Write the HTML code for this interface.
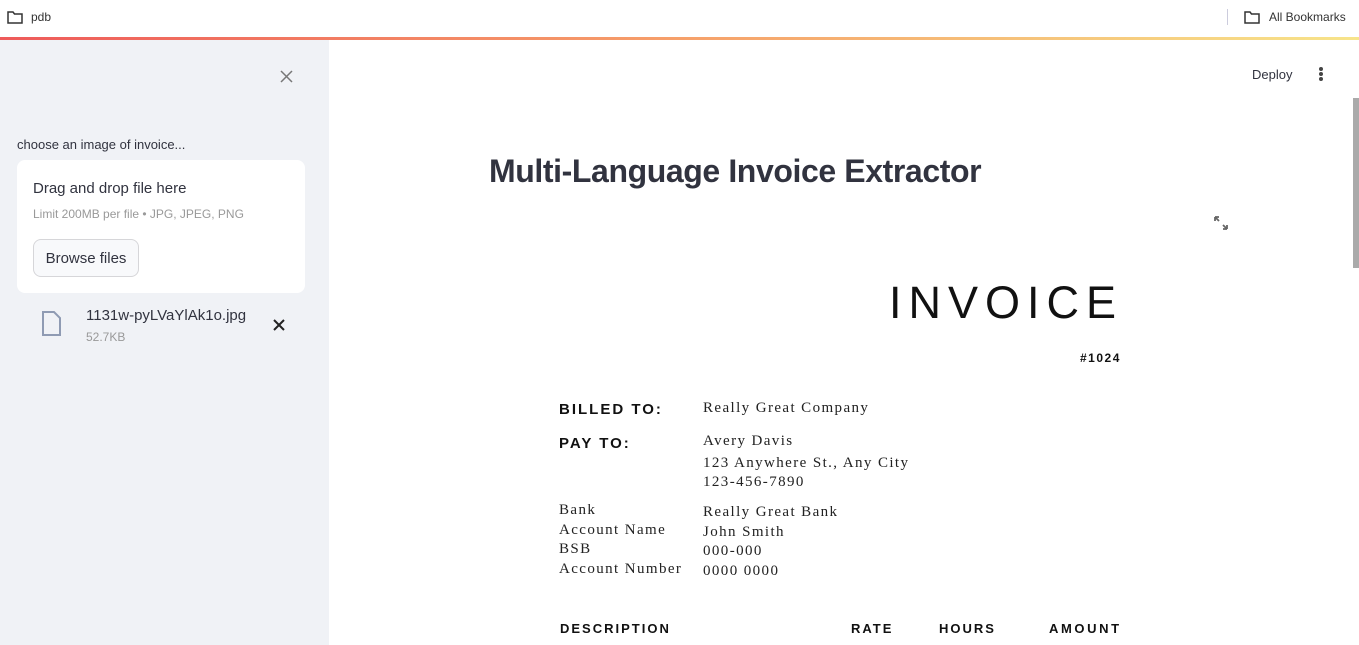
<!DOCTYPE html>
<html><head><style>
body{margin:0;width:1359px;height:645px;overflow:hidden;font-family:"Liberation Sans",sans-serif;background:#fff;position:relative}
.a{position:absolute;white-space:nowrap}
.bar{position:absolute;left:0;top:0;width:1359px;height:37px;background:#fff}
.grad{position:absolute;left:0;top:37px;width:1359px;height:3px;background:linear-gradient(90deg,#ee5a5a,#f6a06a 50%,#f7e48a)}
.side{position:absolute;left:0;top:40px;width:329px;height:605px;background:#f0f2f6}
.sans{color:#31333f}
.serif{font-family:"Liberation Serif",serif;color:#222;font-size:15px;letter-spacing:1.4px}
.cap{font-weight:bold;color:#111;letter-spacing:2px}
</style></head><body>
<div class="bar"></div>
<svg class="a" style="left:7px;top:10px" width="16" height="14" viewBox="0 0 16 14"><path d="M1 2h5l1.5 2H15v9H1z" fill="none" stroke="#333" stroke-width="1.5"/></svg>
<div class="a" style="left:31px;top:10px;font-size:12px;color:#333">pdb</div>
<div class="a" style="left:1227px;top:9px;width:1px;height:16px;background:#ccd"></div>
<svg class="a" style="left:1244px;top:10px" width="16" height="14" viewBox="0 0 16 14"><path d="M1 2h5l1.5 2H15v9H1z" fill="none" stroke="#333" stroke-width="1.5"/></svg>
<div class="a" style="left:1269px;top:10px;font-size:12px;color:#333">All Bookmarks</div>
<div class="grad"></div>
<div class="side"></div>
<svg class="a" style="left:280px;top:70px" width="13" height="13" viewBox="0 0 13 13"><path d="M1 1L12 12M12 1L1 12" stroke="#777" stroke-width="1.5"/></svg>
<div class="a sans" style="left:17px;top:137px;font-size:13px">choose an image of invoice...</div>
<div class="a" style="left:17px;top:160px;width:288px;height:133px;background:#fff;border-radius:8px"></div>
<div class="a sans" style="left:33px;top:180px;font-size:15px">Drag and drop file here</div>
<div class="a" style="left:33px;top:207px;font-size:12px;color:#999">Limit 200MB per file • JPG, JPEG, PNG</div>
<div class="a sans" style="left:33px;top:239px;width:104px;height:36px;border:1px solid #d6d6d9;border-radius:8px;background:#f8f9fb;font-size:15px;line-height:38px;text-align:center">Browse files</div>
<svg class="a" style="left:41px;top:311px" width="20" height="25" viewBox="0 0 20 25"><path d="M2 1h11l6 6v17H2z" fill="none" stroke="#8f9bb3" stroke-width="2"/></svg>
<div class="a sans" style="left:86px;top:307px;font-size:15px">1131w-pyLVaYlAk1o.jpg</div>
<div class="a" style="left:86px;top:330px;font-size:12px;color:#999">52.7KB</div>
<svg class="a" style="left:273px;top:319px" width="12" height="12" viewBox="0 0 12 12"><path d="M1 1L11 11M11 1L1 11" stroke="#222" stroke-width="2"/></svg>
<div class="a sans" style="left:1252px;top:67px;font-size:13px">Deploy</div>
<div class="a" style="left:1319px;top:67px;width:4px;height:4px;border-radius:2px;background:#444;box-shadow:0 5px 0 #444,0 10px 0 #444"></div>
<div class="a" style="left:1353px;top:98px;width:6px;height:170px;background:#aaa"></div>
<div class="a sans" style="left:489px;top:153px;font-size:32px;font-weight:bold;letter-spacing:-0.4px">Multi-Language Invoice Extractor</div>
<svg class="a" style="left:1213px;top:215px" width="16" height="16" viewBox="0 0 16 16"><path d="M2 2l4 4M2 2v4M2 2h4M14 14l-4-4M14 14v-4M14 14h-4" stroke="#666" stroke-width="1.8" fill="none"/></svg>
<div class="a" style="left:889px;top:277px;font-size:45px;color:#111;letter-spacing:7px">INVOICE</div>
<div class="a cap" style="left:1080px;top:351px;font-size:12px;letter-spacing:1.5px">#1024</div>
<div class="a cap" style="left:559px;top:401px;font-size:15px">BILLED TO:</div>
<div class="a cap" style="left:559px;top:435px;font-size:15px">PAY TO:</div>
<div class="a serif" style="left:703px;top:400px">Really Great Company</div>
<div class="a serif" style="left:703px;top:433px">Avery Davis</div>
<div class="a serif" style="left:703px;top:455px">123 Anywhere St., Any City</div>
<div class="a serif" style="left:703px;top:474px">123-456-7890</div>
<div class="a serif" style="left:559px;top:501px;line-height:19.5px">Bank<br>Account Name<br>BSB<br>Account Number</div>
<div class="a serif" style="left:703px;top:503px;line-height:19.5px">Really Great Bank<br>John Smith<br>000-000<br>0000 0000</div>
<div class="a cap" style="left:560px;top:621px;font-size:13px">DESCRIPTION</div>
<div class="a cap" style="left:851px;top:621px;font-size:13px">RATE</div>
<div class="a cap" style="left:939px;top:621px;font-size:13px">HOURS</div>
<div class="a cap" style="left:1049px;top:621px;font-size:13px;letter-spacing:2.6px">AMOUNT</div>
</body></html>
